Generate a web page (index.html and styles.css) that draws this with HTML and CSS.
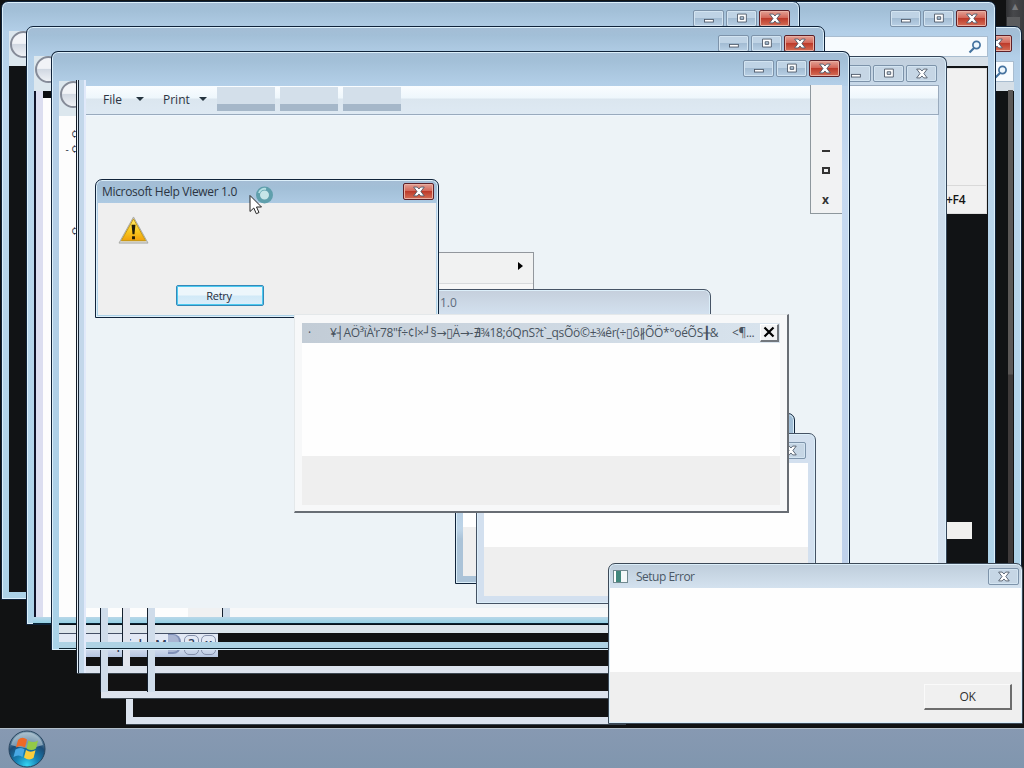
FILE: index.html
```html
<!DOCTYPE html>
<html lang="en">
<head>
  <meta charset="UTF-8">
  <title>Desktop</title>
  <link rel="stylesheet" href="styles.css">
</head>
<body>
  <svg class="defs" width="0" height="0">
    <symbol id="i-min" viewBox="0 0 30 17"><rect x="10.5" y="9.5" width="10" height="3" fill="#fff" stroke="#4b5666"/></symbol>
    <symbol id="i-max" viewBox="0 0 30 17"><path d="M10.5 3.500h10v9h-10z M13.5 6.500v3h4v-3z" fill="#fff" fill-rule="evenodd" stroke="#4b5666"/></symbol>
    <symbol id="i-close" viewBox="0 0 30 17"><path d="M9.500 3.500h4l2 2.200 2-2.200h4l-3.800 5 3.800 5h-4l-2-2.200-2 2.200h-4l3.800-5z" fill="#fff" stroke="#4b5666"/></symbol>
    <symbol id="i-search" viewBox="0 0 14 14"><circle cx="8.500" cy="5" r="3.600" fill="#eef7fd" stroke="#44729f" stroke-width="1.700"/><path d="M6 8 1.500 12.500" stroke="#44729f" stroke-width="2.200"/></symbol>
  </svg>

  <div class="desktop">
    <div class="side-scroll"><span>▲</span></div>
    <div class="side-track"></div>

    <!-- browser windows at the back -->
    <div class="window back-right">
      <div class="captions"><svg class="cap red"><use href="#i-close"/></svg></div>
      <div class="search"><svg><use href="#i-search"/></svg></div>
      <div class="pane dark"></div>
    </div>
    <div class="side-scroll inner"></div>
    <div class="window back-main">
      <div class="captions">
        <svg class="cap"><use href="#i-min"/></svg>
        <svg class="cap"><use href="#i-max"/></svg>
        <svg class="cap red"><use href="#i-close"/></svg>
      </div>
      <div class="search"><svg><use href="#i-search"/></svg></div>
      <div class="pane dark"></div>
    </div>
    <div class="system-menu"><span>+F4</span></div>
    <div class="white-scrap"></div>

    <div class="window cascade one">
      <div class="captions">
        <svg class="cap"><use href="#i-min"/></svg>
        <svg class="cap"><use href="#i-max"/></svg>
        <svg class="cap red"><use href="#i-close"/></svg>
      </div>
      <div class="nav"><i class="back-button"></i></div>
      <div class="pane dark"></div>
    </div>
    <div class="window cascade two">
      <div class="captions">
        <svg class="cap"><use href="#i-min"/></svg>
        <svg class="cap"><use href="#i-max"/></svg>
        <svg class="cap red"><use href="#i-close"/></svg>
      </div>
      <div class="nav"><i class="back-button"></i></div>
      <div class="pane striped"></div>
    </div>

    <!-- leftover frames along the bottom -->
    <div class="trail t3"></div>
    <div class="trail t2"></div>
    <div class="trail t1"></div>
    <div class="old-title"><span class="w1">yr</span><span class="w2">are quick</span><span class="w3">M</span><b></b><i>?</i><i>x</i></div>

    <div class="viewer-bottom"></div>
    <div class="window viewer">
      <div class="captions">
        <svg class="cap"><use href="#i-min"/></svg>
        <svg class="cap"><use href="#i-max"/></svg>
        <svg class="cap"><use href="#i-close"/></svg>
      </div>
      <div class="toolbar">
        <span class="menu-file">File</span><i class="arrow"></i>
        <span class="menu-print">Print</span><i class="arrow"></i>
        <b></b><b></b><b></b>
      </div>
      <div class="pane"></div>
    </div>
    <div class="cross-strip first"></div>
    <div class="cross-strip grey"></div>
    <div class="post p1"></div>
    <div class="post p2"></div>
    <div class="post p3"></div>
    <div class="post p4"></div>

    <div class="window cascade three">
      <div class="captions">
        <svg class="cap"><use href="#i-min"/></svg>
        <svg class="cap"><use href="#i-max"/></svg>
        <svg class="cap red"><use href="#i-close"/></svg>
      </div>
      <div class="nav"><i class="back-button"></i></div>
      <div class="page-edge"><span>¢</span><span>- ¢</span><span>¢</span></div>
    </div>
    <div class="viewer-edge"></div>
    <div class="small-menu"><i class="m-min"></i><i class="m-max"></i><span>x</span></div>

    <div class="submenu"><i></i></div>
    <div class="window ghost-title">1.0</div>
    <div class="window ghost-back"><div class="pane"></div></div>
    <div class="window ghost-front">
      <div class="captions"><svg class="cap"><use href="#i-close"/></svg></div>
      <div class="pane"></div>
    </div>

    <div class="window help-dialog">
      <div class="title">
        <span>Microsoft Help Viewer 1.0</span>
        <svg class="cap red"><use href="#i-close"/></svg>
      </div>
      <div class="dialog-body">
        <svg class="warning" viewBox="0 0 32 30">
          <defs><linearGradient id="gold" x1="0" y1="0" x2="0" y2="1"><stop offset="0" stop-color="#ffe96a"/><stop offset=".6" stop-color="#f8c51c"/><stop offset="1" stop-color="#f0a00c"/></linearGradient></defs>
          <path d="M16 1 31 28H1z" fill="#d9d9d2" stroke="#a8a9a5"/>
          <path d="M16 3 28.500 25.500H3.500z" fill="url(#gold)" stroke="#c5960f"/>
          <path d="M14 9h4l-1 10h-2z M14.500 21h3v3h-3z" fill="#211c08"/>
        </svg>
        <button>Retry</button>
      </div>
    </div>

    <div class="classic-dialog">
      <div class="title"><span class="dot">·</span><span class="garbled">¥┤AÖ³ïÀˈr78"f÷¢l×┘§→▯Ä→-∄¾18;óQnS?t`_qsÕö©±¾êr(÷▯ô∦ÕÖ*°oéÕS╂&amp;</span><span class="more">&lt;¶...</span>
        <div class="classic-close"><svg viewBox="0 0 12 12"><path d="M1.500 1.500l9 9M10.500 1.500l-9 9" stroke="#000" stroke-width="2.200"/></svg></div>
      </div>
      <div class="message"></div>
      <div class="footer"></div>
    </div>

    <div class="window setup-dialog">
      <div class="title">
        <i class="app-icon"></i>
        <span>Setup Error</span>
        <svg class="cap"><use href="#i-close"/></svg>
      </div>
      <div class="message"></div>
      <div class="footer"><button>OK</button></div>
    </div>

    <svg class="cursor" viewBox="0 0 28 30">
      <circle cx="16.500" cy="10" r="6.500" fill="#c6e5e8" stroke="#5f9fac" stroke-width="4"/>
      <path d="M11 8a6 6 0 0 1 7-4" fill="none" stroke="#b5e0e4" stroke-width="2"/>
      <path d="M2 10.500v16l3.800-3.500 2.500 5.700 2.700-1.200-2.500-5.500h5z" fill="#fff" stroke="#222"/>
    </svg>

    <div class="taskbar">
      <svg class="orb" viewBox="0 0 38 38">
        <defs>
          <radialGradient id="orb" cx=".5" cy=".95" r=".9"><stop offset="0" stop-color="#36d5f2"/><stop offset=".35" stop-color="#1681b4"/><stop offset=".7" stop-color="#1c4c76"/><stop offset="1" stop-color="#7f9db2"/></radialGradient>
        </defs>
        <circle cx="19" cy="19" r="18" fill="url(#orb)" stroke="#27445e"/>
        <path d="M3 15a16.500 16.500 0 0 1 32 0q-16 6-32 0z" fill="#d5e3e9" opacity=".5"/>
        <path d="M10 10q4-4 9-.5L17 17.500q-4.500-3-9 0z" fill="#ee6a27"/>
        <path d="M20.500 10.500q4.500 3 9.500 0L28 18.500q-4.500 3-9.500 0z" fill="#93c947"/>
        <path d="M7.500 19.500q4.500-3 9-.2L14.500 27q-4-3-9 0z" fill="#48a8e4"/>
        <path d="M18 20q4.500 3.200 9.500.2L25.500 28q-4.500 3-9.500-.5z" fill="#fccd3c"/>
      </svg>
    </div>
  </div>
</body>
</html>
```
FILE: styles.css
```css
:root {
  --edge: #10233a;
  --face: #efefef;
}

* {
  box-sizing: border-box;
}

body {
  margin: 0;
  overflow: hidden;
  font-family: "Open Sans", "Noto Sans", "DejaVu Sans", sans-serif;
  font-size: 12px;
  color: #2b3442;
}

.defs {
  position: absolute;
}

.desktop {
  position: relative;
  width: 1024px;
  height: 768px;
  overflow: hidden;
  background: #111213;
}

/* every window sits freely on the desktop */
.window {
  position: absolute;
  display: flex;
  flex-direction: column;
  padding: 0 7px 7px;
  border: 1px solid var(--edge);
  border-radius: 7px 7px 0 0;
  box-shadow: inset 0 0 0 1px #dceffa;
  background: linear-gradient(#a5bdd5, #a2bfd7 8px, #b3cfe8 30px, #bcd6ec 100px, #acd2e8);
}
.captions {
  display: flex;
  flex: none;
  justify-content: flex-end;
  gap: 2px;
  height: 34px;
  padding: 8px 1px 0 0;
}
.cap {
  flex: none;
  width: 31px;
  height: 17px;
  border: 1px solid #7d93aa;
  border-radius: 2px;
  background: linear-gradient(#bfd3e5 45%, #a3bcd3 50%, #b9d0e5);
  box-shadow: inset 0 0 0 1px #d3e4f1;
}
.cap.red {
  border-color: #5d2028;
  background: linear-gradient(#e3a195, #d3685a 45%, #bd3b2b 50%, #d56e56);
  box-shadow: inset 0 0 0 1px #e9b0a3;
}
.pane {
  flex: 1;
}
.pane.dark {
  background: #111315;
}
.nav {
  flex: none;
  height: 30px;
  background: #dce7ee;
}
.back-button {
  display: block;
  width: 27px;
  height: 27px;
  border: 2px solid #858b98;
  border-radius: 50%;
  margin-left: 1px;
  background: linear-gradient(#f1f3f7 45%, #d1d8e2 50%, #eef1f5);
}

/* right hand side */
.side-scroll {
  position: absolute;
  left: 1006px;
  top: 0;
  width: 18px;
  height: 40px;
  background: linear-gradient(90deg, #303134, #47484b 40%, #3a3b3e);
  color: #77797c;
  font-size: 8px;
  text-align: center;
}
.side-scroll.inner {
  left: 1008px;
  top: 90px;
  width: 5px;
  height: 475px;
  background: linear-gradient(#5b5857 284px, #3f3b3b 285px);
}
.side-track {
  position: absolute;
  left: 1007px;
  top: 17px;
  width: 13px;
  height: 20px;
  background: #5b5c5e;
}
.back-right {
  left: 300px;
  top: 26px;
  width: 722px;
  height: 620px;
}
.search {
  flex: none;
  display: flex;
  align-items: center;
  justify-content: flex-end;
  height: 21px;
  margin-bottom: 9px;
  padding-right: 5px;
  border: 1px solid #a9bdd0;
  background: #f7fbfe;
  box-shadow: 0 9px 0 #d6dfe7;
}
.search svg {
  width: 14px;
  height: 14px;
}
.back-right .captions {
  padding-right: 2px;
}
.back-main {
  left: 300px;
  top: 1px;
  width: 696px;
  height: 650px;
}
.system-menu {
  position: absolute;
  left: 940px;
  top: 68px;
  width: 47px;
  height: 146px;
  display: flex;
  flex-direction: column;
  justify-content: flex-end;
  border: 1px solid #dedede;
  background: #f1f1f1;
  color: #151515;
  font-weight: 600;
  font-size: 12px;
}
.system-menu span {
  height: 28px;
  padding-left: 5px;
  border-top: 1px solid #d9d9d9;
  line-height: 27px;
  letter-spacing: -0.3px;
}
.white-scrap {
  position: absolute;
  left: 946px;
  top: 522px;
  width: 26px;
  height: 17px;
  background: #f0f0ee;
}

/* cascaded copies */
.cascade {
  width: 799px;
  height: 599px;
}
.one {
  left: 1px;
  top: 1px;
}
.two {
  left: 26px;
  top: 26px;
}
.cascade .captions {
  height: 29px;
  padding-right: 2px;
}
.one .nav,
.two .nav {
  height: 35px;
}
.striped {
  background: linear-gradient(90deg, #10142a 2px, #dcdef0 2px, #dcdef0 9px, transparent 9px), linear-gradient(#0b0d10 7px, #fdfdfd 7px);
}
.three {
  left: 51px;
  top: 51px;
  padding: 0;
  border-bottom: 0;
  background:
    linear-gradient(#a5bdd5, #a2bfd7 8px, #b3cfe8 33px) 0 0 / 100% 34px no-repeat,
    linear-gradient(#b4cee6, #b4cee6 30%, #a9d2e8) 0 0 / 7px 100% no-repeat,
    linear-gradient(#b4cee6, #c7daf1 120px, #bdcfe9) 100% 0 / 7px 100% no-repeat,
    linear-gradient(#aed2e4 6px, #0b2230 6px) 0 100% / 100% 8px no-repeat;
}
.cascade.three .captions {
  padding-right: 9px;
}
.three .nav {
  width: 18px;
  height: 35px;
  margin-left: 7px;
  overflow: hidden;
}
.page-edge {
  width: 18px;
  height: 494px;
  margin-left: 7px;
  padding-top: 11px;
  background: #fdfdfd;
  font-size: 10px;
  line-height: 15px;
  text-align: right;
}
.page-edge span {
  display: block;
}
.page-edge span:last-child {
  padding-top: 67px;
}

/* window remains below the viewer */
.trail {
  position: absolute;
  border: solid #dce3ee;
  border-width: 0 0 7px 7px;
  background: #121213;
  box-shadow: 0 1px 0 #3c4650;
}
.t1 {
  left: 77px;
  top: 600px;
  width: 600px;
  height: 73px;
}
.t2 {
  left: 101px;
  top: 600px;
  width: 600px;
  height: 98px;
}
.t3 {
  left: 126px;
  top: 600px;
  width: 500px;
  height: 124px;
}
.old-title {
  position: absolute;
  left: 58px;
  top: 633px;
  width: 160px;
  height: 24px;
  display: flex;
  align-items: flex-start;
  border-top: 1px solid #445066;
  background: linear-gradient(#e2e9f5 10px, #b5c5e1);
  clip-path: polygon(0 0, 100% 0, 100% 100%, 27px 100%, 27px 16px, 0 16px);
  color: #34415c;
  font-size: 13px;
  font-weight: 600;
  line-height: 20px;
}
.w1 {
  width: 30px;
}
.w2 {
  width: 67px;
}
.w3 {
  width: 13px;
}
.old-title b {
  width: 13px;
  height: 20px;
  margin-right: 3px;
  border: solid #7f8fb7;
  border-width: 1px 2px 2px 0;
  border-radius: 0 8px 8px 0;
  background: #a9b5d2;
}
.old-title i {
  width: 15px;
  height: 20px;
  margin: 1px 2px 0 0;
  border: 1px solid #8591ac;
  border-radius: 5px;
  font-style: normal;
  line-height: 15px;
  text-align: center;
}
.viewer-bottom {
  position: absolute;
  left: 85px;
  top: 608px;
  width: 600px;
  height: 9px;
  background: linear-gradient(90deg, #fdfdfd 103px, #f0f1f2 103px, #f0f1f2 137px, #f7f8f9 145px);
}
.viewer {
  left: 76px;
  top: 56px;
  width: 871px;
  height: 552px;
  padding-bottom: 0;
  border-color: #344458;
  border-bottom: 0;
  background: linear-gradient(#c1cfdd, #c8d9e9 30px, #d8e4f1);
}
.viewer .captions {
  height: 28px;
  padding-right: 2px;
}
.viewer .cap,
.ghost-front .cap,
.setup-dialog .cap {
  background: #c6d6e5;
}
.toolbar {
  flex: none;
  display: flex;
  height: 30px;
  border: 1px solid #99aabd;
  padding-left: 18px;
  background: linear-gradient(#fafdff, #eef7fc 12px, #dbe6ef 13px, #dee9f3);
  line-height: 28px;
}
.toolbar .menu-file {
  width: 33px;
}
.toolbar .menu-print {
  width: 36px;
}
.toolbar .arrow {
  margin: 11px 19px 0 0;
  border: 4px solid transparent;
  border-top-color: #25343f;
  height: 4px;
}
.toolbar .arrow + b {
  margin-left: -9px;
}
.toolbar b {
  width: 58px;
  height: 24px;
  margin: 1px 5px 0 0;
  background: linear-gradient(#d3dfea 17px, #a5b7c9 17px);
}
.viewer .pane {
  margin-right: 1px;
  border: solid #eff7ff;
  border-width: 1px 1px 0;
  background: #edf3f7;
}
.cross-strip {
  position: absolute;
  left: 33px;
  top: 617px;
  width: 650px;
  height: 7px;
  background: linear-gradient(#b9d7e8, #95d1e5 6px, #082334 6px);
}
.cross-strip.grey {
  left: 59px;
  top: 624px;
  height: 9px;
  background: linear-gradient(#08121a 1px, #dce5ec 1px);
}
.post {
  position: absolute;
  top: 608px;
  width: 8px;
  border-left: 1px solid #15202e;
  background: #cfdcea;
}
.p1 {
  left: 100px;
  height: 84px;
}
.p2 {
  left: 122px;
  height: 58px;
  background: #e1e5ee;
}
.p3 {
  left: 147px;
  height: 84px;
}
.p4 {
  left: 222px;
  height: 9px;
}
.viewer-edge {
  position: absolute;
  left: 76px;
  top: 80px;
  width: 10px;
  height: 593px;
  border-left: 1px solid #111a26;
  background: linear-gradient(90deg, #e5eff7 1px, #182534 1px, #182534 2px, #c3d7ea 2px, #c3d7ea 7px, #e1e9fa 7px);
}
.small-menu {
  position: absolute;
  left: 810px;
  top: 85px;
  width: 32px;
  height: 129px;
  display: flex;
  flex-direction: column;
  align-items: center;
  padding: 65px 2px 0 0;
  border: solid #8e979d;
  border-width: 0 0 1px 1px;
  background: #f1f2f3;
}
.m-min {
  width: 8px;
  height: 2px;
  background: #333;
}
.m-max {
  width: 8px;
  height: 7px;
  margin: 15px 0 20px;
  border: 2px solid #333;
}
.small-menu span {
  color: #333;
  font-weight: 700;
  line-height: 12px;
}

/* ghosts behind the dialogs */
.submenu {
  position: absolute;
  left: 400px;
  top: 252px;
  width: 134px;
  height: 40px;
  border: 1px solid #92979d;
  background: linear-gradient(#f1f2f2 30px, #d8dadc 30px, #d8dadc 31px, #f7f7f7 31px);
}
.submenu i {
  display: block;
  margin: 9px 0 0 117px;
  width: 4px;
  border: 4px solid transparent;
  border-left: 5px solid #000;
  border-right: 0;
}
.ghost-title {
  left: 400px;
  top: 289px;
  width: 311px;
  height: 60px;
  padding: 4px 0 0 39px;
  border-color: #465466;
  background: linear-gradient(#c5cfdc, #d4e2f0 26px);
  color: #606c7d;
}
.ghost-back {
  left: 455px;
  top: 413px;
  width: 340px;
  height: 171px;
  padding-top: 28px;
  background: linear-gradient(#9fbcd5, #bdd4e8 115px, #abc3d8 125px);
}
.ghost-back .pane {
  background: linear-gradient(#fff 85px, #efefef 85px);
}
.ghost-front {
  left: 476px;
  top: 433px;
  width: 340px;
  height: 171px;
  border-color: #455264;
  background: #d3e0ef;
}
.ghost-front .captions {
  height: 29px;
  padding-right: 2px;
}
.ghost-front .pane {
  background: linear-gradient(#fefefe 84px, #efefef 84px);
}

.title {
  display: flex;
  flex: none;
}
.help-dialog {
  left: 95px;
  top: 179px;
  width: 344px;
  height: 139px;
  padding: 0 2px 2px;
}
.help-dialog .title {
  height: 23px;
  justify-content: space-between;
  padding: 3px 2px 0 4px;
  line-height: 18px;
  letter-spacing: -0.32px;
}
.dialog-body {
  flex: 1;
  display: flex;
  flex-direction: column;
  padding: 13px 0 0 20px;
  background: var(--face);
}
.warning {
  width: 31px;
  height: 29px;
}
.help-dialog button {
  width: 88px;
  height: 21px;
  margin: 40px 0 0 58px;
  padding: 0 2px 0 0;
  border: 1px solid #3688b8;
  border-radius: 2px;
  background: linear-gradient(#edf6fb 48%, #d1e9f7 52%, #dceefa);
  box-shadow: inset 0 0 0 1px #4bcaf0;
  color: #1e2c3c;
  font: 11px "Open Sans", sans-serif;
  letter-spacing: -0.3px;
}

.classic-dialog {
  position: absolute;
  left: 294px;
  top: 314px;
  width: 495px;
  height: 199px;
  display: flex;
  flex-direction: column;
  padding: 8px 7px 6px;
  border: solid #e4e8ea;
  border-width: 1px 2px 2px 1px;
  border-right-color: #686d74;
  border-bottom-color: #686d74;
  background: #f7f8f9;
}
.classic-dialog .title {
  height: 20px;
  align-items: center;
  padding-bottom: 1px;
  background: linear-gradient(90deg, #c2ccd6, #d9e4ee);
  color: #48535e;
  line-height: 18px;
  white-space: nowrap;
}
.dot {
  width: 28px;
  padding-left: 6px;
}
.garbled {
  width: 402px;
  letter-spacing: -0.3px;
}
.more {
  width: 28px;
  letter-spacing: -0.4px;
}
.classic-close {
  display: flex;
  align-items: center;
  justify-content: center;
  width: 19px;
  height: 18px;
  border: solid #fff;
  border-width: 1px 2px 2px 1px;
  border-right-color: #72777d;
  border-bottom-color: #72777d;
  background: #f1f2f3;
}
.classic-close svg {
  width: 12px;
  height: 12px;
}
.message {
  flex: none;
  height: 113px;
  background: #fefefe;
}
.footer {
  flex: 1;
  background: var(--face);
}

.setup-dialog {
  left: 608px;
  top: 563px;
  width: 415px;
  height: 161px;
  padding: 0 1px 1px;
  border-color: #3c4957;
  background: linear-gradient(#becddb, #d4e2ef 24px);
}
.setup-dialog .title {
  height: 24px;
  align-items: center;
  padding: 0 2px 0 3px;
  color: #4b5866;
}
.setup-dialog .title span {
  flex: 1;
  padding-left: 8px;
  letter-spacing: -0.5px;
}
.app-icon {
  width: 15px;
  height: 13px;
  border: 1px solid #718990;
  background: linear-gradient(90deg, #fff 2px, #42877d 2px, #42877d 7px, #f4f8f9 7px);
}
.setup-dialog .message {
  height: 84px;
}
.setup-dialog .footer {
  display: flex;
  justify-content: flex-end;
  align-items: flex-start;
  padding: 12px 9px 0 0;
}
.setup-dialog button {
  width: 88px;
  height: 26px;
  border: solid #fafafa;
  border-width: 1px 2px 2px 1px;
  border-right-color: #6d6d6d;
  border-bottom-color: #6d6d6d;
  background: #f0f0f0;
  color: #303030;
  font: 12px "Open Sans", sans-serif;
  letter-spacing: -0.4px;
}

.cursor {
  position: absolute;
  left: 248px;
  top: 185px;
  width: 28px;
  height: 30px;
}
.taskbar {
  position: absolute;
  left: 0;
  top: 728px;
  width: 1024px;
  height: 40px;
  padding: 1px 8px;
  border-top: 1px solid #b2bfca;
  background: linear-gradient(#8799b2, #8096ae);
}
.orb {
  display: block;
  width: 38px;
  height: 38px;
}
```
